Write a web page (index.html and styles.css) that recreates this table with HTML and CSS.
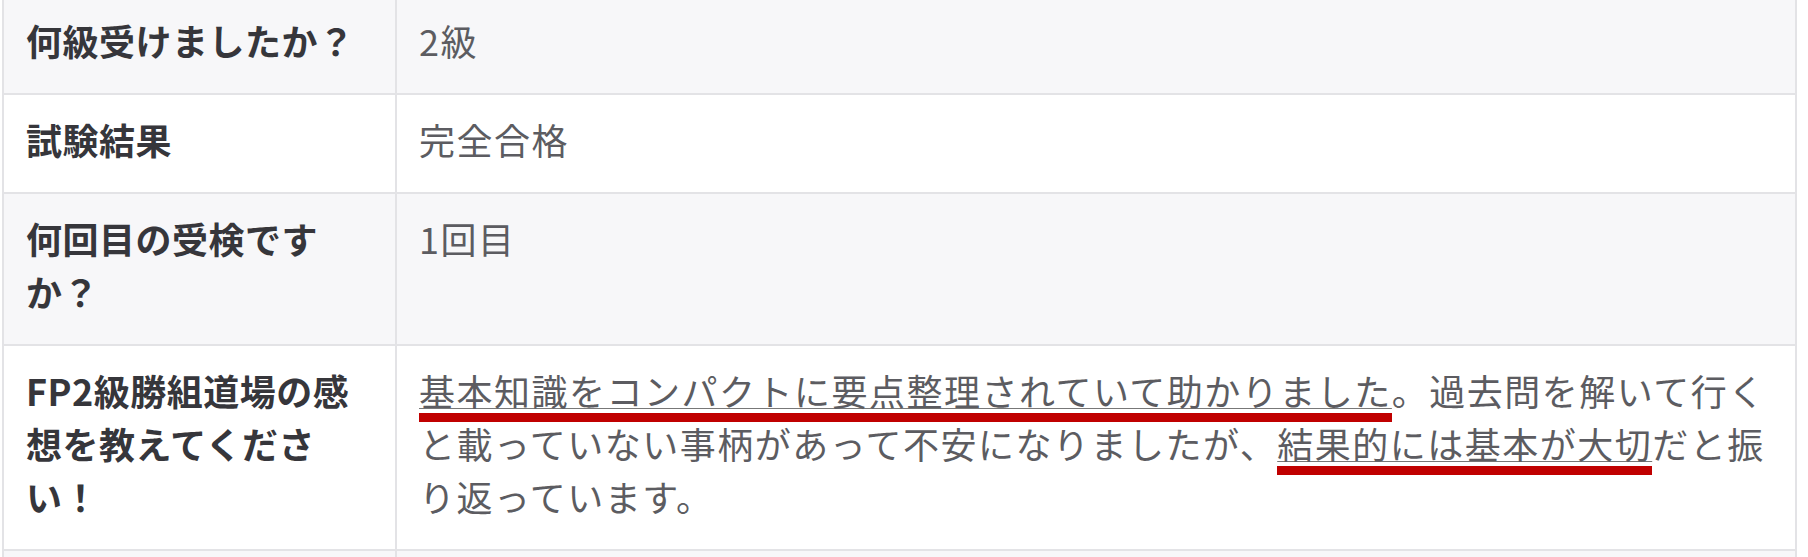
FILE: index.html
```html
<!DOCTYPE html>
<html lang="ja">
<head>
    <meta charset="UTF-8">
    <meta name="viewport" content="width=device-width, initial-scale=1.0">
    <title>受験者の声</title>
    <link rel="stylesheet" href="styles.css">
</head>
<body>
    <table class="voice-table">
        <tbody>
            <tr>
                <th>何級受けましたか？</th>
                <td>2級</td>
            </tr>
            <tr>
                <th>試験結果</th>
                <td>完全合格</td>
            </tr>
            <tr>
                <th>何回目の受検ですか？</th>
                <td>1回目</td>
            </tr>
            <tr>
                <th>FP2級勝組道場の感想を教えてください！</th>
                <td><span class="marker">基本知識をコンパクトに要点整理されていて助かりました</span>。過去問を解いて行くと載っていない事柄があって不安になりましたが、<span class="marker">結果的には基本が大切</span>だと振り返っています。</td>
            </tr>
            <tr>
                <th>&nbsp;</th>
                <td>&nbsp;</td>
            </tr>
        </tbody>
    </table>
</body>
</html>
```

FILE: styles.css
```css
* {
    margin: 0;
    padding: 0;
    box-sizing: border-box;
}

body {
    background: #fff;
    font-family: "Noto Sans CJK JP", "Noto Sans", sans-serif;
    overflow: hidden;
    padding-left: 2px;
}

.voice-table {
    width: 1795px;
    margin-top: -6px;
    border-collapse: collapse;
    table-layout: fixed;
}

.voice-table tr:nth-child(odd) {
    background: #f7f7f9;
}

.voice-table th,
.voice-table td {
    border: 2px solid #e3e3e6;
    padding: 18px 22px 26px;
    font-size: 36px;
    line-height: 53px;
    letter-spacing: 1.5px;
    text-align: left;
    vertical-align: top;
}

.voice-table th {
    width: 393px;
    font-weight: 700;
    color: #36363b;
    letter-spacing: 0.5px;
}

.voice-table td {
    font-weight: 400;
    color: #5c5c61;
}

.marker {
    text-decoration: underline;
    text-decoration-thickness: 1px;
    text-underline-offset: 2px;
    text-decoration-color: #777;
    padding-bottom: 6px;
    background: linear-gradient(#c00000, #c00000) no-repeat;
    background-size: 100% 9px;
    background-position: 0 100%;
}
```
